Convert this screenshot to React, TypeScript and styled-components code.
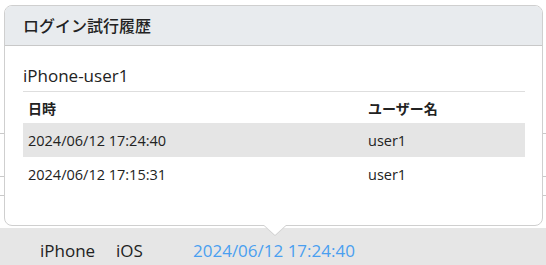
import styled, { createGlobalStyle } from "styled-components";

const GlobalStyle = createGlobalStyle`
  html, body {
    margin: 0;
    padding: 0;
    background: #fff;
  }
  body {
    font-family: "Open Sans", "Noto Sans CJK JP", sans-serif;
    color: #212529;
  }
`;

const latin = `"Open Sans", "Noto Sans CJK JP", sans-serif`;
const jp = `"Noto Sans CJK JP", "Open Sans", sans-serif`;

const Page = styled.div`
  position: relative;
  width: 546px;
  height: 265px;
  overflow: hidden;
  background: #fff;
`;

const BgTable = styled.div`
  display: flex;
  flex-direction: column;
`;

const BgRow = styled.div<{ $h: number; $plain?: boolean }>`
  height: ${(p) => p.$h}px;
  box-sizing: border-box;
  border-bottom: ${(p) => (p.$plain ? "none" : "1px solid #c9c9c9")};
`;

const DeviceRow = styled.div`
  display: flex;
  align-items: center;
  height: 37px;
  box-sizing: border-box;
  padding: 7px 0 0 40px;
  background: #e6e6e6;
  font-family: ${latin};
  font-size: 17px;
  color: #222;
`;

const DeviceCell = styled.div<{ $w: number; $link?: boolean }>`
  width: ${(p) => p.$w}px;
  white-space: nowrap;
  color: ${(p) => (p.$link ? "#4a9ff0" : "#222")};
`;

const Popover = styled.div`
  position: absolute;
  left: 4px;
  top: 5px;
  width: 539px;
  height: 221px;
  box-sizing: border-box;
  background: #fff;
  border: 1px solid #cfcfcf;
  border-radius: 8px;
  display: flex;
  flex-direction: column;

  &::before,
  &::after {
    content: "";
    position: absolute;
    left: 259px;
    border-style: solid;
    border-width: 10px 11px 0 11px;
    border-color: transparent;
  }
  &::before {
    bottom: -11px;
    border-top-color: #cfcfcf;
  }
  &::after {
    bottom: -10px;
    border-top-color: #fff;
  }
`;

const PopHeader = styled.div`
  height: 40px;
  box-sizing: border-box;
  display: flex;
  align-items: center;
  padding: 0 18px 2px;
  background: #e8ebee;
  border-bottom: 1px solid #c8c8c8;
  border-radius: 7px 7px 0 0;
  font-family: ${jp};
  font-size: 16px;
  font-weight: 500;
  color: #222;
`;

const PopBody = styled.div`
  padding: 15px 17px 0 18px;
  display: flex;
  flex-direction: column;
`;

const DeviceTitle = styled.div`
  font-family: ${latin};
  font-size: 17px;
  line-height: 30px;
  color: #222;
  border-bottom: 1px solid #dedede;
`;

const Table = styled.div`
  display: flex;
  flex-direction: column;
`;

const Row = styled.div<{ $head?: boolean; $alt?: boolean; $h: number }>`
  display: grid;
  grid-template-columns: 340px 1fr;
  align-items: center;
  height: ${(p) => p.$h}px;
  background: ${(p) => (p.$alt ? "#e5e5e5" : "transparent")};
  font-family: ${(p) => (p.$head ? jp : latin)};
  font-size: ${(p) => (p.$head ? "14px" : "14.5px")};
  font-weight: ${(p) => (p.$head ? 700 : 400)};
  color: #222;
`;

const Cell = styled.div`
  padding-left: 5px;
  white-space: nowrap;
`;

const attempts = [
  { at: "2024/06/12 17:24:40", user: "user1" },
  { at: "2024/06/12 17:15:31", user: "user1" },
];

export default function App() {
  return (
    <>
      <GlobalStyle />
      <Page>
        <BgTable>
          <BgRow $h={134} />
          <BgRow $h={43} />
          <BgRow $h={19} />
          <BgRow $h={32} $plain />
          <DeviceRow>
            <DeviceCell $w={76}>iPhone</DeviceCell>
            <DeviceCell $w={77}>iOS</DeviceCell>
            <DeviceCell $w={200} $link>
              2024/06/12 17:24:40
            </DeviceCell>
          </DeviceRow>
        </BgTable>

        <Popover>
          <PopHeader>ログイン試行履歴</PopHeader>
          <PopBody>
            <DeviceTitle>iPhone-user1</DeviceTitle>
            <Table>
              <Row $head $h={31}>
                <Cell>日時</Cell>
                <Cell>ユーザー名</Cell>
              </Row>
              {attempts.map((a, i) => (
                <Row key={i} $alt={i % 2 === 0} $h={34}>
                  <Cell>{a.at}</Cell>
                  <Cell>{a.user}</Cell>
                </Row>
              ))}
            </Table>
          </PopBody>
        </Popover>
      </Page>
    </>
  );
}
